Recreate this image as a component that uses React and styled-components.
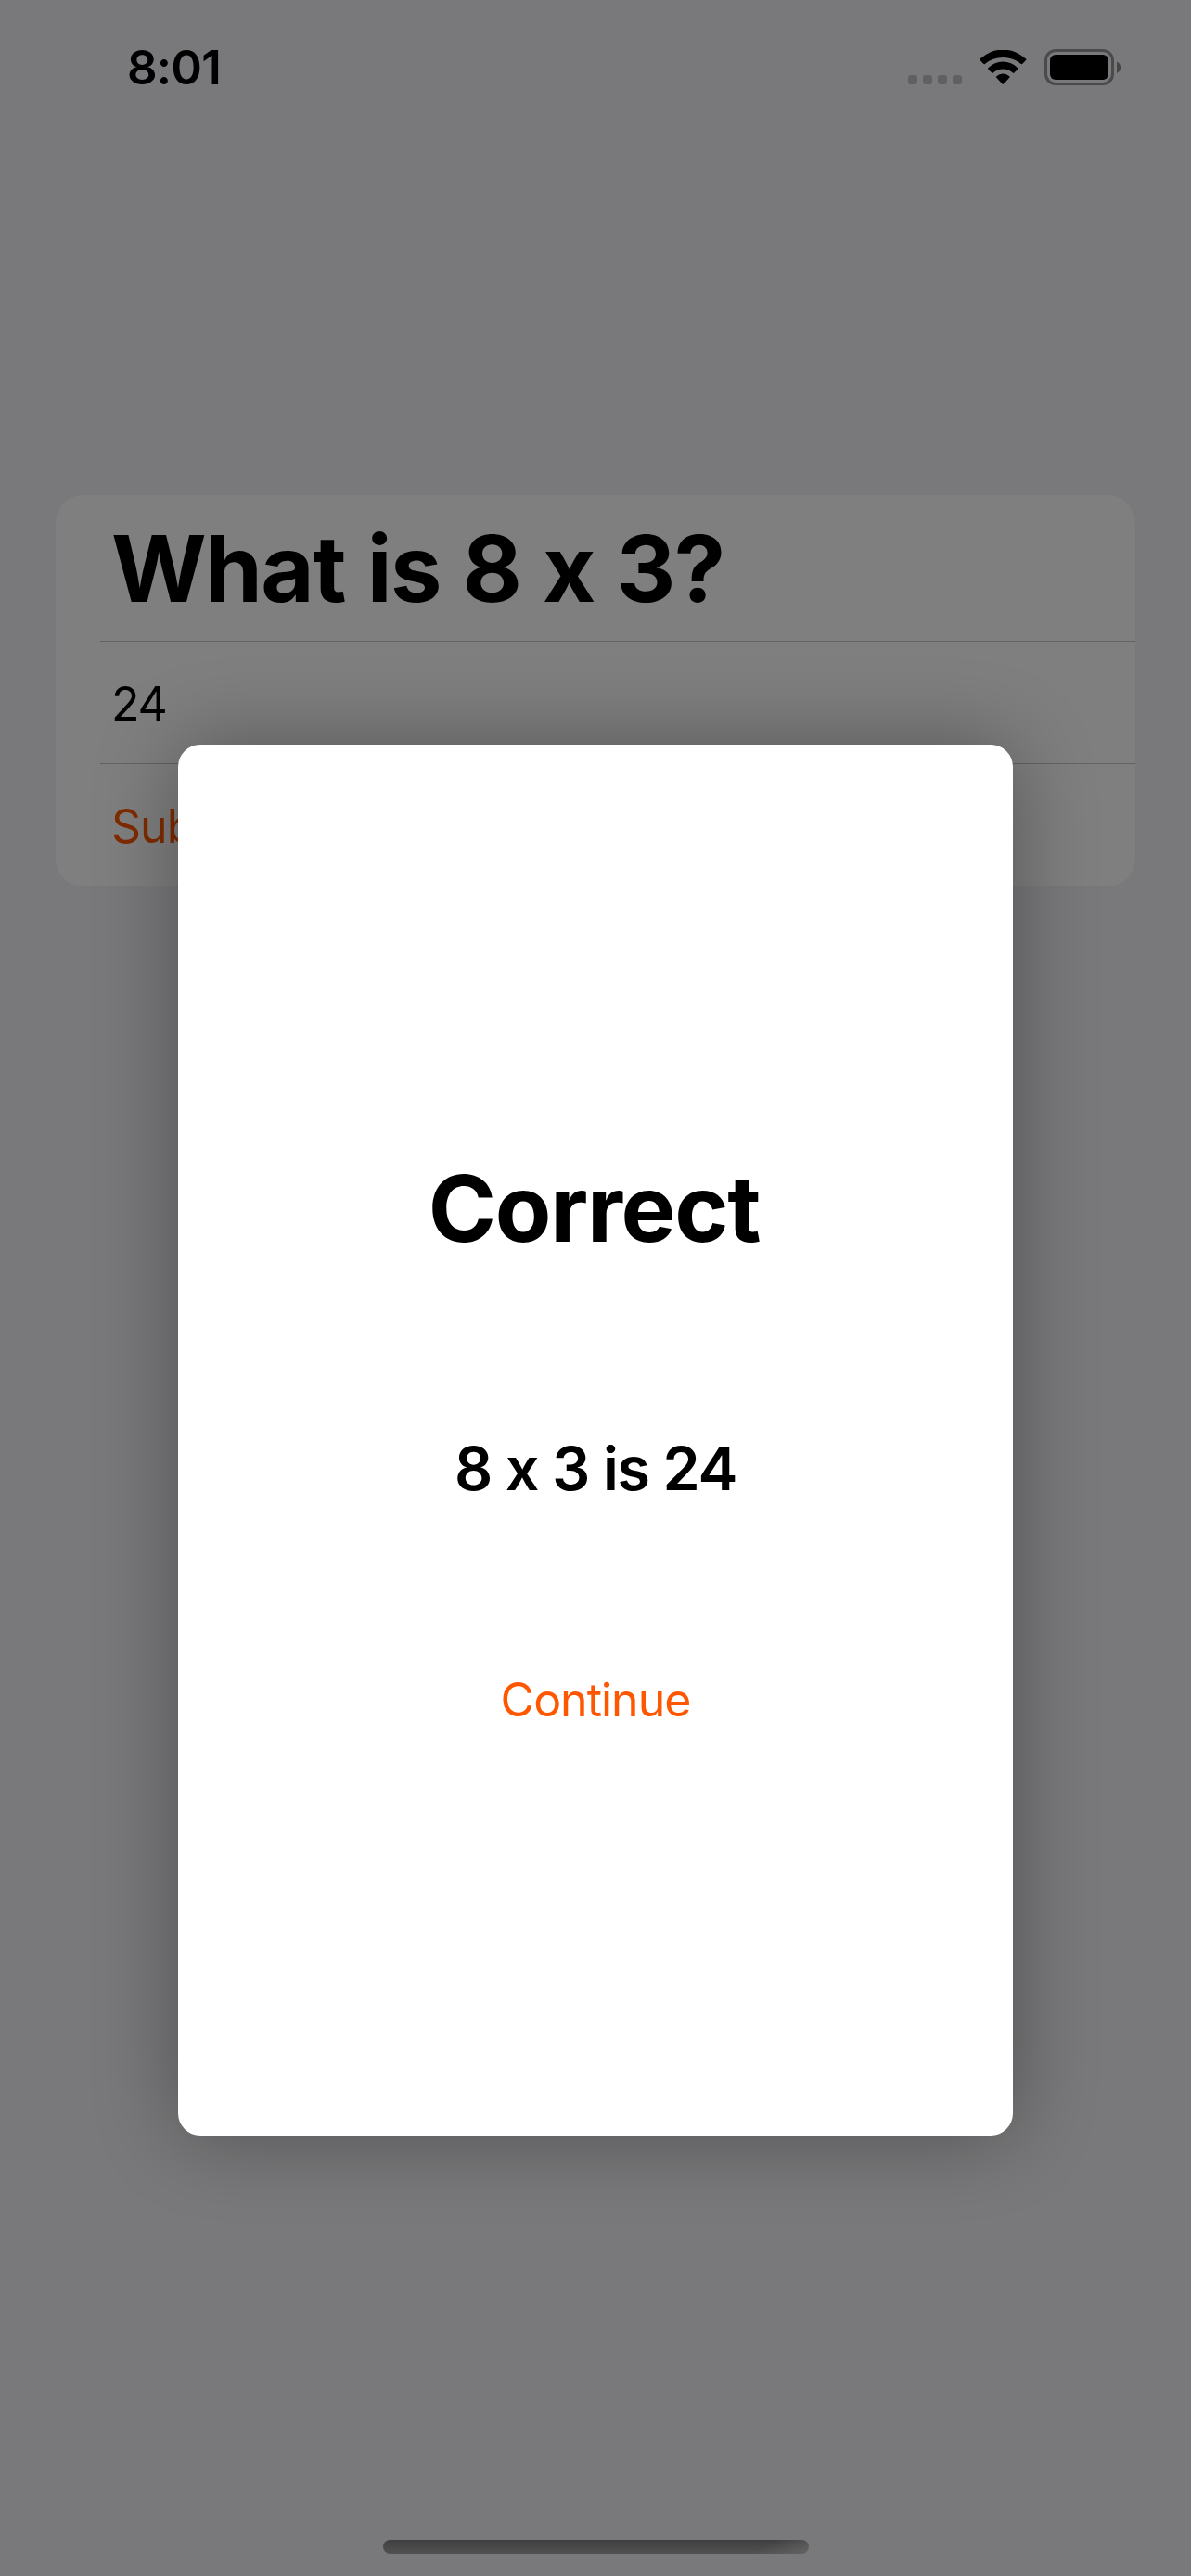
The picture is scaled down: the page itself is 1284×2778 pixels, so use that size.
import React from "react";
import styled, { createGlobalStyle } from "styled-components";

const GlobalStyle = createGlobalStyle`
  *, *::before, *::after { box-sizing: border-box; }
  body {
    margin: 0;
    background: #f2f2f7;
    font-family: Inter, "Liberation Sans", sans-serif;
    color: #000;
  }
`;

const Screen = styled.div`
  position: relative;
  width: 1284px;
  height: 2778px;
  display: flex;
  flex-direction: column;
  background: #f2f2f7;
  overflow: hidden;
`;

const StatusBar = styled.header`
  display: flex;
  justify-content: space-between;
  align-items: center;
  height: 145px;
  padding: 0 76px 0 137px;
`;

const Clock = styled.time`
  font-size: 51px;
  font-weight: 600;
  line-height: 60px;
  letter-spacing: -0.8px;
`;

const StatusIcons = styled.div`
  display: flex;
  align-items: center;
  height: 39px;
`;

const Cellular = styled.div`
  display: flex;
  gap: 6px;
  align-self: flex-end;
  margin: 0 19px 1px 0;
`;

const Dot = styled.span`
  width: 10px;
  height: 10px;
  border-radius: 3px;
  background: #c0c0c3;
`;

const WifiIcon = styled.svg`
  width: 51px;
  height: 38px;
  margin-right: 19px;
`;

const BatteryIcon = styled.svg`
  width: 82px;
  height: 39px;
`;

const Form = styled.form`
  display: flex;
  flex-direction: column;
  margin: 389px 60px 0;
  height: 422px;
  border-radius: 30px;
  background: #fff;
`;

const Row = styled.div`
  display: flex;
  align-items: center;
  height: ${(p) => p.$height}px;
  margin-left: 48px;
  padding: ${(p) => p.$top || 0}px 0 0 12px;
  border-bottom: ${(p) => (p.$last ? "none" : "1px solid #c6c6c8")};
`;

const Question = styled.h1`
  margin: 0;
  font-size: 99px;
  font-weight: 700;
  line-height: 120px;
  letter-spacing: -1.5px;
  word-spacing: 1.6px;
  white-space: nowrap;
`;

const Answer = styled.span`
  font-size: 50px;
  line-height: 60px;
  letter-spacing: -1.2px;
`;

const TextButton = styled.button`
  margin: 0;
  padding: 0;
  border: 0;
  background: none;
  font: inherit;
  font-size: 50px;
  line-height: 60px;
  letter-spacing: -1px;
  color: #ff5700;
`;

const HomeIndicator = styled.div`
  width: 459px;
  height: 15px;
  margin: auto auto 24px;
  border-radius: 8px;
  background:
    linear-gradient(150deg, rgba(210, 210, 210, 0) 35%, rgba(210, 210, 210, 0.75) 100%) right / 70px 15px no-repeat,
    linear-gradient(#7e7e7e, #a2a2a2);
`;

const Backdrop = styled.div`
  position: absolute;
  inset: 0;
  display: flex;
  justify-content: center;
  padding-top: 803px;
  background: rgba(0, 0, 0, 0.5);
`;

const Dialog = styled.section`
  display: flex;
  flex-direction: column;
  align-items: center;
  width: 900px;
  height: 1500px;
  padding-top: 440px;
  border-radius: 24px;
  background: #fff;
  box-shadow: 0 0 90px rgba(0, 0, 0, 0.33);
`;

const Verdict = styled.h2`
  margin: 0 0 181px;
  padding-right: 3px;
  font-size: 99px;
  font-weight: 700;
  line-height: 120px;
  letter-spacing: -1.3px;
`;

const Explanation = styled.p`
  margin: 0 0 179px;
  font-size: 64.5px;
  font-weight: 600;
  line-height: 80px;
  letter-spacing: -1.3px;
`;

export default function App() {
  return (
    <>
      <GlobalStyle />
      <Screen>
        <StatusBar>
          <Clock>8:01</Clock>
          <StatusIcons>
            <Cellular>
              <Dot />
              <Dot />
              <Dot />
              <Dot />
            </Cellular>
            <WifiIcon viewBox="0 0 51 38">
              <path d="M0.6 9.6A35.5 35.5 0 0 1 50 9.6Q50.8 10.3 50 11.1L46.4 14.8Q45.6 15.6 44.8 14.9A31 31 0 0 0 5.8 14.9Q5 15.6 4.2 14.8L0.6 11.1Q-0.2 10.3 0.6 9.6Z" />
              <path d="M9.4 19.2A22.5 22.5 0 0 1 41.2 19.2Q42 20 41.2 20.8L37.4 24.5Q36.6 25.3 35.8 24.5A15.5 15.5 0 0 0 14.8 24.5Q14 25.3 13.2 24.5L9.4 20.8Q8.6 20 9.4 19.2Z" />
              <path d="M18.3 28.2A10.5 10.5 0 0 1 32.3 28.2Q33.1 29 32.3 29.8L26 36.5Q25.3 37.2 24.6 36.5L18.3 29.8Q17.5 29 18.3 28.2Z" />
            </WifiIcon>
            <BatteryIcon viewBox="0 0 82 39">
              <rect x="1.5" y="1.5" width="72" height="36" rx="10.5" fill="none" stroke="#949497" strokeWidth="3" />
              <rect x="6" y="6" width="63" height="27" rx="6" />
              <path d="M78 13.5C83.5 16 83.5 23.5 78 26Z" fill="#8a8a8d" />
            </BatteryIcon>
          </StatusIcons>
        </StatusBar>
        <Form as="main">
          <Row $height={158}>
            <Question>What is 8 x 3?</Question>
          </Row>
          <Row $height={132} $top={3}>
            <Answer>24</Answer>
          </Row>
          <Row $height={132} $top={2} $last>
            <TextButton>Submit</TextButton>
          </Row>
        </Form>
        <HomeIndicator />
        <Backdrop>
          <Dialog role="dialog">
            <Verdict>Correct</Verdict>
            <Explanation>8 x 3 is 24</Explanation>
            <TextButton>Continue</TextButton>
          </Dialog>
        </Backdrop>
      </Screen>
    </>
  );
}
